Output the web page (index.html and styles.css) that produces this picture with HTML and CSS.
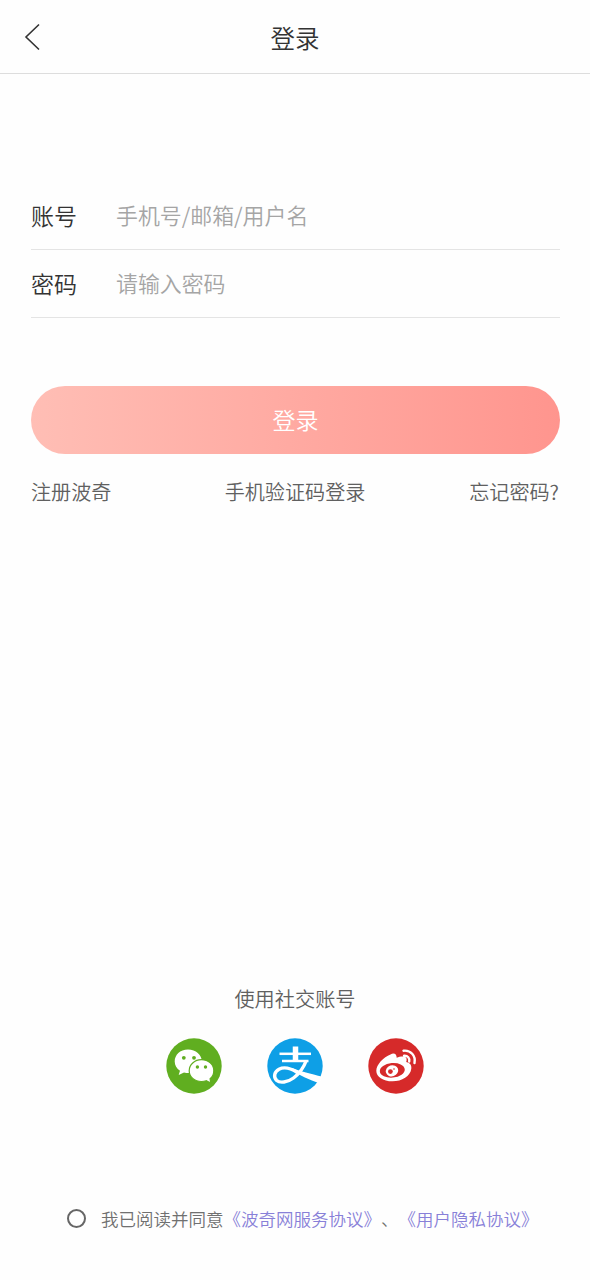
FILE: index.html
```html
<!DOCTYPE html>
<html lang="zh-CN">
<head>
<meta charset="utf-8">
<title>登录</title>
<link rel="stylesheet" href="styles.css">
</head>
<body>
<div class="page">
  <header class="topbar">
    <svg class="back" viewBox="0 0 16 28" aria-hidden="true"><path d="M15 1.500 2 14l13 12.500"/></svg>
    <h1 class="title">登录</h1>
  </header>
  <main class="form">
    <label class="field"><span class="label">账号</span><input class="input" type="text" placeholder="手机号/邮箱/用户名"></label>
    <label class="field"><span class="label">密码</span><input class="input" type="password" placeholder="请输入密码"></label>
    <button class="submit" type="button">登录</button>
    <nav class="links">
      <a class="link">注册波奇</a>
      <a class="link">手机验证码登录</a>
      <a class="link link-end">忘记密码?</a>
    </nav>
  </main>
  <section class="social">
    <p class="social-title">使用社交账号</p>
    <div class="icons">
      <svg class="icon" viewBox="0 0 56 56" aria-label="微信">
        <circle cx="28" cy="28" r="27.700" fill="#60ae20"/>
        <path fill="#fff" d="M22 11.500C14 11.500 8.700 17 8.700 23.500c0 3.900 2 7.200 5.300 9.200l-1.300 4.300 5.300-2.600c2.600.8 5.200.8 7.500.4L36 23.500C35.500 16.500 30 11.500 22 11.500z"/>
        <path fill="#fff" stroke="#60ae20" stroke-width="1.200" d="M35.500 21.700C28.500 21.700 23.200 26.700 23.200 32.700S28.500 43.500 35.500 43.500c1.700 0 3.200-.3 4.700-.8l4.500 2.300-.6-4.300c2.600-1.900 3.700-4.700 3.700-8.200C47.800 26.700 42.500 21.700 35.500 21.700z"/>
        <g fill="#60ae20"><circle cx="17.800" cy="19.800" r="1.900"/><circle cx="28" cy="19.800" r="1.900"/><circle cx="31.400" cy="29" r="1.700"/><circle cx="39.500" cy="29" r="1.700"/></g>
      </svg>
      <svg class="icon" viewBox="0 0 56 56" aria-label="支付宝">
        <circle cx="28" cy="28" r="27.700" fill="#0e9fe6"/>
        <g fill="none" stroke="#fff">
          <path stroke-width="2.500" d="M12.500 15.800H44"/>
          <path stroke-width="2.500" d="M15 23H41.500"/>
          <path stroke-width="5.500" d="M28.500 8.500v15"/>
          <path stroke-width="3.400" d="M39.300 22.500C36.500 30 32.500 35.500 26.500 40 20.500 44.500 13 45.300 9.700 42.500 6 39 7.500 33.500 12 31.200c5.500-2.800 12-.7 18 3"/>
        </g>
        <path fill="#fff" d="M25 30c9 3.500 18 5.800 30.700 8.700l-3.500 6.500C42.500 42 33 37.500 24.500 32z"/>
      </svg>
      <svg class="icon" viewBox="0 0 56 56" aria-label="微博">
        <circle cx="28" cy="28" r="27.700" fill="#d62a2a"/>
        <path fill="#fff" d="M22.500 16.500c3.200-2.100 6.200-.8 6.200 3.300 3.500-1.500 9-2.200 9.800.7.300 1.200.1 2.400-.3 3.600 4.300 1.200 5.500 3.500 5.100 6.600C42.400 38 34 43.300 24.500 43.300 15 43.300 8.300 38.800 8.300 32.700c0-5.700 7.200-13.800 14.200-16.200z"/>
        <ellipse cx="24.300" cy="32.300" rx="12.500" ry="7.300" transform="rotate(-5 24.300 32.300)" fill="#d62a2a"/>
        <ellipse cx="24" cy="32.800" rx="6.300" ry="5.500" transform="rotate(-18 24 32.800)" fill="#fff"/>
        <circle cx="22.400" cy="33.600" r="2.400" fill="#d62a2a"/><circle cx="26" cy="31" r=".8" fill="#d62a2a"/>
        <path fill="none" stroke="#fff" stroke-width="2.400" stroke-linecap="round" d="M35.500 12.700c7-.8 12.500 4.800 11 12.300M36 17.800c3.600-.3 6 2.200 5.200 5.700"/>
      </svg>
    </div>
  </section>
  <footer class="terms">
    <span class="radio"></span>
    <span class="terms-text">我已阅读并同意<a class="policy">《波奇网服务协议》</a>、<a class="policy">《用户隐私协议》</a></span>
  </footer>
</div>
</body>
</html>
```
FILE: styles.css
```css
* { box-sizing: border-box; }
body {
  margin: 0;
  background: #fefefe;
  color: #333;
  font-family: "Noto Sans CJK SC", sans-serif;
  font-weight: 350;
}
.page {
  height: 1280px;
  display: flex;
  flex-direction: column;
  overflow: hidden;
}
.topbar {
  height: 74px;
  display: grid;
  grid-template-columns: 40px 1fr 40px;
  align-items: center;
  border-bottom: 1px solid #ddd;
}
.back {
  width: 16px;
  height: 28px;
  margin-left: 24px;
  fill: none;
  stroke: #333;
  stroke-width: 1.6;
}
.title {
  margin: 2px 0 0;
  text-align: center;
  font-size: 24.5px;
  font-weight: 350;
  line-height: 36px;
}
.form {
  padding: 108px 30px 0 31px;
}
.field {
  height: 68px;
  display: flex;
  align-items: center;
  padding-bottom: 2px;
  border-bottom: 1px solid #e4e4e4;
}
.label {
  width: 85px;
  font-size: 23px;
  line-height: 34px;
}
.input {
  flex: 1;
  min-width: 0;
  height: 34px;
  padding: 0;
  border: 0;
  outline: 0;
  background: none;
  font: 350 21.9px "Noto Sans CJK SC", sans-serif;
}
.input::placeholder { color: #a5a5a5; }
.submit {
  display: block;
  width: 529px;
  height: 68px;
  margin-top: 68px;
  padding: 0 0 2px;
  border: 0;
  border-radius: 34px;
  background: linear-gradient(90deg, #ffbeb5, #ff958e);
  color: #fff;
  font: 350 23px "Noto Sans CJK SC", sans-serif;
}
.links {
  display: grid;
  grid-template-columns: 1fr auto 1fr;
  margin: 23px 1px 0 0;
}
.link {
  color: #606060;
  font-size: 20.1px;
  line-height: 30px;
}
.link-end { text-align: right; }
.social {
  margin-top: auto;
  display: flex;
  flex-direction: column;
  align-items: center;
}
.social-title {
  margin: 0 0 24px;
  color: #606060;
  font-size: 20.2px;
  line-height: 30px;
}
.icons {
  display: flex;
  gap: 45px;
}
.icon {
  width: 56px;
  height: 56px;
}
.terms {
  display: flex;
  align-items: center;
  height: 30px;
  margin: 110px 0 46px 67px;
}
.radio {
  width: 19px;
  height: 19px;
  margin: 0 15px 2px 0;
  border: 2px solid #666;
  border-radius: 50%;
}
.terms-text {
  color: #707070;
  font-size: 17.5px;
  line-height: 30px;
  white-space: nowrap;
  text-spacing-trim: space-all;
}
.policy { color: #8880d8; }
```
